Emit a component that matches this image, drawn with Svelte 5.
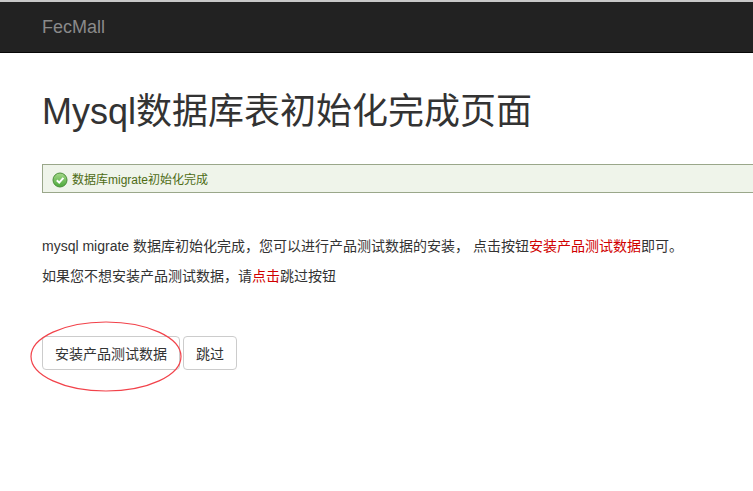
<script>
	let title = 'Mysql数据库表初始化完成页面';
</script>

<div class="page">
	<nav class="navbar">
		<a class="brand" href="#top">FecMall</a>
	</nav>

	<main class="content">
		<h1>{title}</h1>

		<div class="alert">
			<svg class="check" width="16" height="16" viewBox="0 0 16 16" aria-hidden="true">
				<defs>
					<linearGradient id="ok" x1="0" y1="0" x2="0" y2="1">
						<stop offset="0" stop-color="#a5d88a" />
						<stop offset="1" stop-color="#4ba83a" />
					</linearGradient>
				</defs>
				<circle cx="8" cy="8" r="7" fill="url(#ok)" stroke="#4c8f3c" />
				<path d="M4.8 8.2 7.2 10.6 11.4 5.8" fill="none" stroke="#fff" stroke-width="2" />
			</svg>
			<span>数据库migrate初始化完成</span>
		</div>

		<p class="first">mysql migrate 数据库初始化完成，您可以进行产品测试数据的安装， 点击按钮<span class="red">安装产品测试数据</span>即可。</p>
		<p>如果您不想安装产品测试数据，请<span class="red">点击</span>跳过按钮</p>

		<div class="actions">
			<button type="button">安装产品测试数据</button>
			<button type="button">跳过</button>
			<svg class="circle" width="152" height="71" viewBox="0 0 152 71" aria-hidden="true">
				<ellipse cx="76" cy="35.5" rx="75" ry="34.5" fill="none" stroke="#f2424a" stroke-width="1.2" />
			</svg>
		</div>
	</main>
</div>

<style>
	:global(body) {
		margin: 0;
		background: #fff;
		overflow: hidden;
	}

	.page {
		height: 491px;
		overflow: hidden;
		font-family: "Liberation Sans", "Noto Sans CJK SC", sans-serif;
		font-size: 14px;
		color: #333;
		border-top: 2px solid #c8c8c8;
		box-sizing: border-box;
	}

	.navbar {
		height: 50px;
		background: #222;
		border-bottom: 1px solid #080808;
		padding-left: 42px;
		display: flex;
		align-items: center;
	}

	.brand {
		color: #8a8a8a;
		font-size: 18px;
		text-decoration: none;
	}

	.content {
		padding-left: 42px;
	}

	h1 {
		margin: 35px 0 0;
		font-size: 36px;
		line-height: 48px;
		font-weight: 400;
		color: #333;
	}

	.alert {
		width: 900px;
		height: 29px;
		margin-top: 28px;
		box-sizing: border-box;
		display: flex;
		align-items: center;
		gap: 4px;
		padding-left: 9px;
		background: #eff4ea;
		border: 1px solid #9aa78a;
		color: #4d6b14;
		font-size: 12px;
	}

	.check {
		margin-top: 2px;
	}

	p {
		margin: 0 0 10px;
		line-height: 20px;
		white-space: nowrap;
	}

	.first {
		margin-top: 43px;
	}

	.red {
		color: #d00000;
	}

	.actions {
		position: relative;
		display: flex;
		gap: 3px;
		margin-top: 50px;
	}

	button {
		height: 34px;
		padding: 0 12px;
		background: #fff;
		border: 1px solid #ccc;
		border-radius: 4px;
		font: inherit;
		color: #333;
	}

	.circle {
		position: absolute;
		left: -12px;
		top: -15px;
		pointer-events: none;
	}
</style>
